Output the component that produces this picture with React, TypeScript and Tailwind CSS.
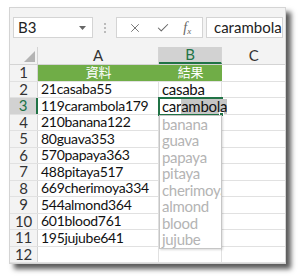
import { X, Check } from 'lucide-react';

const rows: [string, string][] = [
  ['21casaba55', 'casaba'],
  ['119carambola179', ''],
  ['210banana122', ''],
  ['80guava353', ''],
  ['570papaya363', ''],
  ['488pitaya517', ''],
  ['669cherimoya334', ''],
  ['544almond364', ''],
  ['601blood761', ''],
  ['195jujube641', ''],
  ['', ''],
];

const suggestions = ['banana', 'guava', 'papaya', 'pitaya', 'cherimoya', 'almond', 'blood', 'jujube'];

export default function App() {
  return (
    <div className="w-[302px] h-[280px] bg-white overflow-hidden" style={{ fontFamily: 'Lato, "Noto Sans CJK TC", sans-serif' }}>
      <div className="ml-[9px] mt-[7px] w-[277px] h-[257px] bg-[#f3f3f3] border border-[#d4d4d4] shadow-[5px_5px_5px_rgba(0,0,0,0.65)] overflow-hidden">
        {/* formula bar */}
        <div className="flex items-center mt-[9px] h-[21px]">
          <div className="ml-[3px] w-[80px] h-full bg-white border border-[#d4d4d4] flex items-center justify-between pl-[4px] pr-[6px] text-[15px] text-[#222]">
            <span>B3</span>
            <svg width="7" height="4" viewBox="0 0 7 4"><path d="M0 0h7L3.5 4z" fill="#666" /></svg>
          </div>
          <div className="w-[23px] flex justify-center">
            <div className="flex flex-col gap-[2px]">
              <span className="w-[2px] h-[2px] bg-[#bbb]" />
              <span className="w-[2px] h-[2px] bg-[#bbb]" />
              <span className="w-[2px] h-[2px] bg-[#bbb]" />
            </div>
          </div>
          <div className="w-[87px] h-full bg-white border border-[#d4d4d4] flex items-center justify-around px-[4px] text-[#666]">
            <X size={14} strokeWidth={1.5} />
            <Check size={14} strokeWidth={1.8} />
            <span className="italic text-[14px] leading-none" style={{ fontFamily: '"Liberation Serif", serif' }}>f<sub className="text-[9px]">x</sub></span>
          </div>
          <div className="ml-[3px] w-[77px] h-full bg-white border border-[#d4d4d4] flex items-center pl-[7px] text-[15px] text-[#222] whitespace-nowrap overflow-hidden">
            carambola
          </div>
        </div>

        {/* grid */}
        <div className="mt-[9px] text-[14px] tracking-[-0.3px] leading-none relative">
          <div className="flex h-[18px] bg-[#f3f3f3] border-b border-[#d4d4d4] text-[15px]">
            <div className="w-[28px] border-r border-[#d4d4d4] flex items-end justify-end p-[2px]">
              <svg width="11" height="11" viewBox="0 0 11 11"><path d="M11 0V11H0z" fill="#b4b4b4" /></svg>
            </div>
            <div className="w-[121px] border-r border-[#d4d4d4] flex items-center justify-center text-[#333]">A</div>
            <div className="w-[63px] bg-[#d2d2d2] border-r border-[#d4d4d4] border-b-2 border-b-[#217346] flex items-center justify-center text-[#217346]">B</div>
            <div className="w-[63px] flex items-center justify-center text-[#333]">C</div>
          </div>
          <div className="flex h-[16.5px] border-b border-[#e1e1e1]">
            <div className="w-[28px] bg-[#f3f3f3] border-r border-[#d4d4d4] flex items-center justify-center text-[#333] text-[15px]">1</div>
            <div className="w-[121px] bg-[#70ad47] flex items-center justify-center text-white text-[13px]">資料</div>
            <div className="w-[63px] bg-[#70ad47] flex items-center justify-center text-white text-[13px]">結果</div>
            <div className="w-[63px] bg-white" />
          </div>
          {rows.map(([a, b], i) => {
            const n = i + 2;
            const active = n === 3;
            return (
              <div key={n} className="flex h-[16.5px] border-b border-[#e1e1e1]">
                <div className={`w-[28px] flex items-center justify-center border-r text-[15px] ${active ? 'bg-[#d2d2d2] text-[#217346] border-r-2 border-r-[#217346]' : 'bg-[#f3f3f3] text-[#333] border-[#d4d4d4]'}`}>{n}</div>
                <div className="w-[121px] bg-white border-r border-[#e1e1e1] flex items-center pl-[3px] text-[#111] whitespace-nowrap">{a}</div>
                <div className="w-[63px] bg-white border-r border-[#e1e1e1] flex items-center pl-[3px] text-[#111] text-[15px] whitespace-nowrap">{b}</div>
                <div className="w-[63px] bg-white" />
              </div>
            );
          })}

          {/* active cell B3 */}
          <div className="absolute left-[148px] top-[50px] w-[65px] h-[18.5px] border-2 border-[#217346] bg-white flex items-center pl-[2px] text-[#111] text-[15px] whitespace-nowrap">
            <span>car</span>
            <span className="bg-[#c6c6c6]">ambola</span>
            <span className="w-[1px] h-[14px] bg-black" />
            <span className="absolute right-[-3px] bottom-[-3px] w-[5px] h-[5px] bg-[#217346] border border-white" />
          </div>

          {/* autocomplete list */}
          <div className="absolute left-[149px] top-[68px] w-[63px] bg-white border border-[#c6c6c6] shadow-[1px_1px_2px_rgba(0,0,0,0.15)] overflow-hidden">
            {suggestions.map((s) => (
              <div key={s} className="h-[16.5px] flex items-center pl-[2px] text-[#b4b4b4] text-[15px] whitespace-nowrap">{s}</div>
            ))}
          </div>
        </div>
      </div>
    </div>
  );
}
